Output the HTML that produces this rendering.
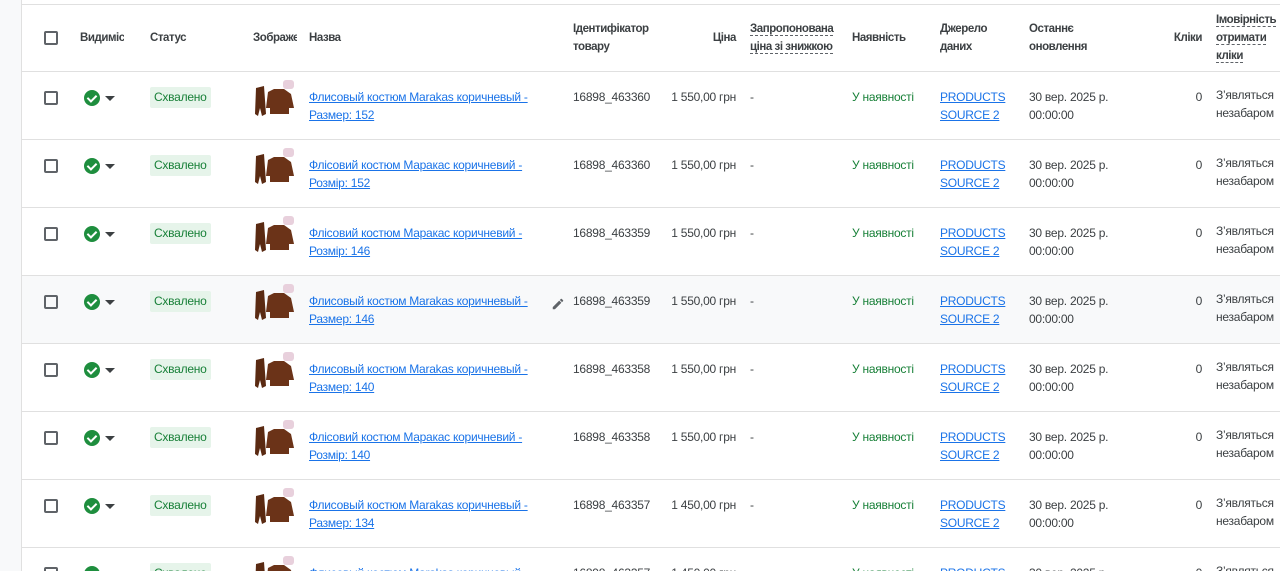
<!DOCTYPE html>
<html style="width:1280px;height:571px;overflow:hidden"><head><meta charset="utf-8"><style>
*{margin:0;padding:0;box-sizing:border-box}
body{width:1280px;height:571px;overflow:hidden;background:#fff;font-family:"Liberation Sans",Arial,sans-serif;font-size:12px;letter-spacing:-0.25px;color:#3c4043;position:relative}
#wrap{position:absolute;left:0;top:0;width:1280px;height:571px;overflow:hidden}
.side{position:absolute;left:0;top:0;width:22px;height:571px;background:#f8f9fa;border-right:1px solid #e0e0e0}
.topb{position:absolute;left:22px;right:0;top:4px;border-top:1px solid #e0e0e0}
.hdr{position:absolute;left:22px;right:0;top:5px;height:67px;border-bottom:1px solid #e0e0e0;font-weight:bold;color:#3c4043;font-size:11.5px;letter-spacing:-0.45px}
.a{position:absolute;line-height:18px;white-space:nowrap}
.row{position:absolute;left:22px;right:0;height:68px;border-bottom:1px solid #e0e0e0}
.cb{position:absolute;left:22px;width:14px;height:14px;border:2px solid #5f6368;border-radius:2px}
.chk{position:absolute;left:62px;width:16px;height:16px;border-radius:50%;background:#1e8e3e}
.chk:after{content:"";position:absolute;left:5px;top:2.5px;width:4px;height:7px;border:solid #fff;border-width:0 2px 2px 0;transform:rotate(45deg)}
.tri{position:absolute;left:83px;width:0;height:0;border-left:5px solid transparent;border-right:5px solid transparent;border-top:5px solid #3c4043}
.badge{position:absolute;left:128px;height:21px;padding:0 4px;background:#e6f4ea;color:#188038;line-height:21px;border-radius:2px}
.img{position:absolute;left:230px;width:44px;height:40px}
.lk{color:#1a73e8;text-decoration:underline}
.dash{border-bottom:1px dashed #5f6368}
.r{text-align:right}
.g{color:#188038}
</style></head><body>
<div id="wrap">
<div class="side"></div>
<div class="topb"></div>
<div class="hdr">
<div class="cb" style="top:26px"></div>
<div class="a" style="left:58px;top:24px;width:44px;overflow:hidden">Видимість</div>
<div class="a" style="left:128px;top:24px">Статус</div>
<div class="a" style="left:231px;top:24px;width:44px;overflow:hidden">Зображення</div>
<div class="a" style="left:287px;top:24px">Назва</div>
<div class="a" style="left:551px;top:15px">Ідентифікатор<br>товару</div>
<div class="a r" style="left:640px;width:74px;top:24px">Ціна</div>
<div class="a" style="left:728px;top:15px"><span class="dash">Запропонована</span><br><span class="dash">ціна зі знижкою</span></div>
<div class="a" style="left:830px;top:24px">Наявність</div>
<div class="a" style="left:918px;top:15px">Джерело<br>даних</div>
<div class="a" style="left:1007px;top:15px">Останнє<br>оновлення</div>
<div class="a r" style="left:1130px;width:50px;top:24px">Кліки</div>
<div class="a" style="left:1194px;top:6px"><span class="dash">Імовірність</span><br><span class="dash">отримати</span><br><span class="dash">кліки</span></div>
</div>
<svg width="0" height="0" style="position:absolute"><defs><g id="suit"><path d="M4 10 L12 8 L14 36 L10 38 L8 30 L6 38 L3 36 Z" fill="#5a2a12"/><path d="M16 14 L22 11 L32 11 L39 16 L42 30 L37 30 L37 36 L18 36 L18 30 L14 30 Z" fill="#6b3318"/><rect x="31" y="2" width="11" height="9" rx="3" fill="#e8d0dc"/></g></defs></svg>
<div id="rows"></div>
</div>
<script>
var d=[["Флисовый костюм Marakas коричневый -","Размер: 152","16898_463360","1 550,00 грн"],
["Флісовий костюм Маракас коричневий -","Розмір: 152","16898_463360","1 550,00 грн"],
["Флісовий костюм Маракас коричневий -","Розмір: 146","16898_463359","1 550,00 грн"],
["Флисовый костюм Marakas коричневый -","Размер: 146","16898_463359","1 550,00 грн"],
["Флисовый костюм Marakas коричневый -","Размер: 140","16898_463358","1 550,00 грн"],
["Флісовий костюм Маракас коричневий -","Розмір: 140","16898_463358","1 550,00 грн"],
["Флисовый костюм Marakas коричневый -","Размер: 134","16898_463357","1 450,00 грн"],
["Флисовый костюм Marakas коричневый -","Размер: 134","16898_463357","1 450,00 грн"]];
var h="";
d.forEach(function(r,i){var t=72+i*68;
h+='<div class="row" style="top:'+t+'px;'+(i==3?'background:#f8f9fa;':'')+(i==7?'height:23px;overflow:hidden;border:0;':'')+'">'+
'<div class="cb" style="top:19px"></div><div class="chk" style="top:18px"></div><div class="tri" style="top:24px"></div>'+
'<div class="badge" style="top:15px">Схвалено</div>'+
'<svg class="img" style="top:6px" viewBox="0 0 44 40"><use href="#suit"/></svg>'+
'<div class="a" style="left:287px;top:16px"><span class="lk">'+r[0]+'</span><br><span class="lk">'+r[1]+'</span></div>'+
(i==3?'<svg class="a" style="left:529px;top:21px" width="14" height="14" viewBox="0 0 24 24"><path fill="#5f6368" d="M3 17.25V21h3.75L17.81 9.94l-3.75-3.75L3 17.25zM20.71 7.04a1 1 0 0 0 0-1.41l-2.34-2.34a1 1 0 0 0-1.41 0l-1.83 1.83 3.75 3.75 1.83-1.83z"/></svg>':'')+
'<div class="a" style="left:551px;top:16px">'+r[2]+'</div>'+
'<div class="a r" style="left:620px;width:94px;top:16px">'+r[3]+'</div>'+
'<div class="a" style="left:728px;top:16px">-</div>'+
'<div class="a g" style="left:830px;top:16px">У наявності</div>'+
'<div class="a" style="left:918px;top:16px"><span class="lk">PRODUCTS</span><br><span class="lk">SOURCE 2</span></div>'+
'<div class="a" style="left:1007px;top:16px">30 вер. 2025 р.<br>00:00:00</div>'+
'<div class="a r" style="left:1130px;width:50px;top:16px">0</div>'+
'<div class="a" style="left:1194px;top:14px">З’являться<br>незабаром</div></div>';});
document.getElementById("rows").innerHTML=h;
</script>
</body></html>
